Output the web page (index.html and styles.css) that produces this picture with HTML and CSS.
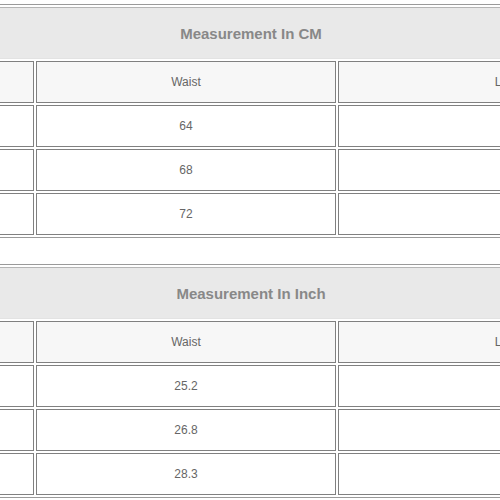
FILE: index.html
```html
<!DOCTYPE html>
<html>
<head>
<meta charset="utf-8">
<link rel="stylesheet" href="styles.css">
</head>
<body>
<div class="page">
  <div class="chart">
    <table class="size-table">
      <colgroup><col class="c1"><col class="c2"><col class="c3"></colgroup>
      <tr><td class="title" colspan="3">Measurement In CM</td></tr>
      <tr class="head"><td>Size</td><td>Waist</td><td>Length</td></tr>
      <tr><td>S</td><td>64</td><td>96</td></tr>
      <tr><td>M</td><td>68</td><td>98</td></tr>
      <tr><td>L</td><td>72</td><td>100</td></tr>
    </table>
  </div>
  <div class="chart">
    <table class="size-table">
      <colgroup><col class="c1"><col class="c2"><col class="c3"></colgroup>
      <tr><td class="title" colspan="3">Measurement In Inch</td></tr>
      <tr class="head"><td>Size</td><td>Waist</td><td>Length</td></tr>
      <tr><td>S</td><td>25.2</td><td>37.8</td></tr>
      <tr><td>M</td><td>26.8</td><td>38.6</td></tr>
      <tr><td>L</td><td>28.3</td><td>39.4</td></tr>
    </table>
  </div>
</div>
</body>
</html>
```
FILE: styles.css
```css
html, body {
  margin: 0;
  padding: 0;
  background: #fff;
}
.page {
  width: 500px;
  overflow: hidden;
  padding-top: 4px;
  font-family: "Liberation Sans", Arial, sans-serif;
}
.chart {
  margin-bottom: 26px;
}
.size-table {
  table-layout: fixed;
  width: 880px;
  margin-left: -189px;
  border-collapse: separate;
  border-spacing: 2px;
  border: 1px solid #9a9a9a;
}
.c1 { width: 220px; }
.c2 { width: 300px; }
.c3 { width: 350px; }
.size-table td {
  box-sizing: border-box;
  height: 42px;
  border: 1px solid #808080;
  padding: 0;
  text-align: center;
  vertical-align: middle;
  font-size: 12px;
  color: #666;
  background: #fff;
}
.size-table td.title {
  height: 52px;
  border: 1px solid #e3e3e3;
  border-top-color: #b5b5b5;
  background: #e9e9e9;
  font-size: 15px;
  font-weight: bold;
  color: #888;
}
.size-table .head td {
  background: #f7f7f7;
}
```
